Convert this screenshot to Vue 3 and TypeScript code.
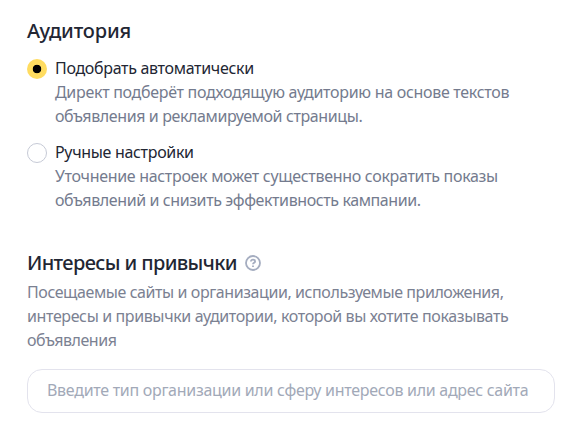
<script setup lang="ts">
import { ref } from 'vue'

interface Line { text: string; tracking: number }
interface Option { id: string; title: string; lines: Line[] }

const selected = ref('auto')
const options: Option[] = [
  {
    id: 'auto',
    title: 'Подобрать автоматически',
    lines: [
      { text: 'Директ подберёт подходящую аудиторию на основе текстов', tracking: -0.3 },
      { text: 'объявления и рекламируемой страницы.', tracking: -0.39 },
    ],
  },
  {
    id: 'manual',
    title: 'Ручные настройки',
    lines: [
      { text: 'Уточнение настроек может существенно сократить показы', tracking: -0.31 },
      { text: 'объявлений и снизить эффективность кампании.', tracking: -0.4 },
    ],
  },
]
const hint: Line[] = [
  { text: 'Посещаемые сайты и организации, используемые приложения,', tracking: -0.42 },
  { text: 'интересы и привычки аудитории, которой вы хотите показывать', tracking: -0.38 },
  { text: 'объявления', tracking: -0.46 },
]
</script>

<template>
  <main class="page">
    <h2 class="heading">Аудитория</h2>
    <div class="options">
      <label v-for="o in options" :key="o.id" class="option">
        <input v-model="selected" class="radio" type="radio" name="audience" :value="o.id" />
        <span class="body">
          <span class="title">{{ o.title }}</span>
          <span v-for="l in o.lines" :key="l.text" class="line" :style="{ letterSpacing: l.tracking + 'px' }">{{ l.text }}</span>
        </span>
      </label>
    </div>
    <h2 class="heading second">
      <span>Интересы и привычки</span>
      <svg class="help" viewBox="0 0 16 16"><circle cx="8" cy="8" r="7" /><path d="M5.9 6.6C5.9 5.2 6.8 4.6 8 4.6s2.1.7 2.1 1.8c0 1.4-2.1 1.4-2.1 2.8M8 10.5v1.6" /></svg>
    </h2>
    <p class="hint">
      <span v-for="l in hint" :key="l.text" class="line" :style="{ letterSpacing: l.tracking + 'px' }">{{ l.text }}</span>
    </p>
    <input class="field" placeholder="Введите тип организации или сферу интересов или адрес сайта" />
  </main>
</template>

<style scoped>
.page { box-sizing: border-box; width: 576px; height: 438px; padding: 18px 21px 0 27px; background: #fff; font: 16px/24px "Noto Sans", sans-serif; color: #222633; letter-spacing: -0.3px; }
.heading { display: flex; align-items: center; gap: 8px; margin: 0; font-size: 20px; line-height: 26px; font-weight: 500; letter-spacing: -0.15px; }
.options { display: flex; flex-direction: column; gap: 12px; margin-top: 12px; }
.option { display: flex; gap: 8px; }
.radio { appearance: none; box-sizing: border-box; flex: none; width: 20px; height: 20px; margin: 3px 0 0; border: 1px solid #c6cad6; border-radius: 50%; }
.radio:checked { border: 0; background: radial-gradient(circle, #000 0 4px, #ffdc60 4.6px); }
.title, .line { display: block; white-space: nowrap; }
.title { letter-spacing: -0.32px; }
.line { color: #747b8e; }
.second { margin-top: 38px; letter-spacing: -0.61px; }
.help { width: 16px; height: 16px; fill: none; stroke: #a5adc0; stroke-width: 1.8; }
.hint { margin: 4px 0 0; }
.hint .line { color: #7b8192; }
.field { box-sizing: border-box; display: block; width: 528px; height: 44px; margin-top: 17px; padding: 0 19px 2px; border: 1px solid #e3e3ed; border-radius: 15px; background: #fff; font: inherit; letter-spacing: -0.29px; }
.field::placeholder { color: #a2a9b8; opacity: 1; }
</style>
